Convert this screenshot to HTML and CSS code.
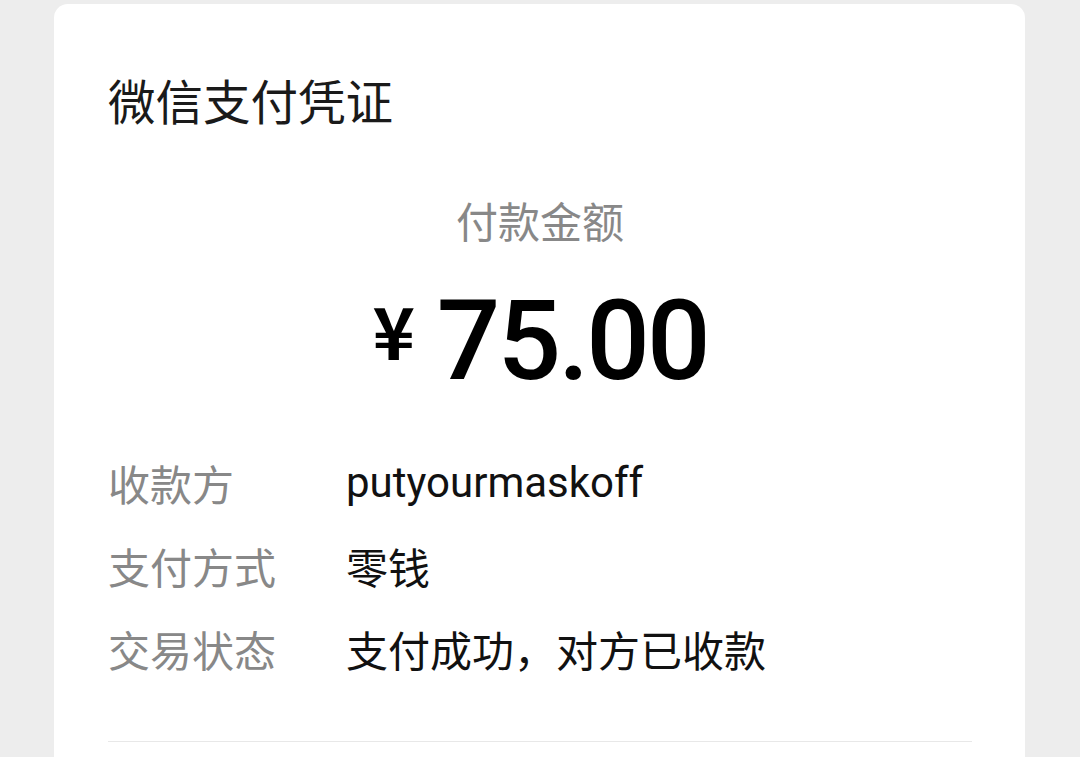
FILE: index.html
```html
<!DOCTYPE html>
<html lang="zh-CN">
<head>
<meta charset="utf-8">
<title>微信支付凭证</title>
<link rel="stylesheet" href="styles.css">
</head>
<body>
<main class="card">
  <h1 class="title">微信支付凭证</h1>
  <div class="amount-label">付款金额</div>
  <div class="amount"><span class="yen">¥</span><span class="num">75.00</span></div>
  <dl class="details">
    <div class="row"><dt>收款方</dt><dd class="latin">putyourmaskoff</dd></div>
    <div class="row"><dt>支付方式</dt><dd>零钱</dd></div>
    <div class="row"><dt>交易状态</dt><dd>支付成功，对方已收款</dd></div>
  </dl>
  <div class="divider"></div>
</main>
</body>
</html>
```
FILE: styles.css
```css
html, body {
  margin: 0;
  padding: 0;
  background: #ededed;
  height: 100%;
  overflow: hidden;
}
body {
  font-family: "Noto Sans CJK SC", "Noto Sans", sans-serif;
  color: #111;
}
.card {
  margin: 4px 0 0 54px;
  width: 971px;
  box-sizing: border-box;
  background: #fff;
  border-radius: 14px;
  padding: 62px 53px 60px 54px;
  min-height: 800px;
}
.title {
  margin: 0;
  font-size: 47.5px;
  font-weight: 400;
  line-height: 68px;
  color: #1a1a1a;
}
.amount-label {
  margin-top: 56px;
  text-align: center;
  font-size: 42px;
  line-height: 60px;
  color: #888;
}
.amount {
  margin-top: 31px;
  display: flex;
  justify-content: center;
  align-items: flex-start;
  height: 120px;
  color: #000;
}
.yen {
  font-family: "Noto Sans CJK SC", sans-serif;
  font-weight: 700;
  font-size: 72px;
  line-height: 68px;
  margin-top: 14px;
  margin-right: 22px;
}
.num {
  font-family: Roboto, "Liberation Sans", sans-serif;
  font-weight: 500;
  font-size: 112px;
  line-height: 120px;
  letter-spacing: -3px;
}
.details {
  margin: 40px 0 0;
}
.row {
  display: flex;
  align-items: center;
  height: 83px;
  font-size: 42px;
}
.row dt {
  width: 238px;
  color: #888;
}
.row dd {
  margin: 0;
  color: #111;
}
.latin {
  font-family: Roboto, "Noto Sans CJK SC", sans-serif;
  font-size: 42px;
}
.divider {
  margin-top: 51px;
  height: 1px;
  background: #e8e8e8;
}
```
